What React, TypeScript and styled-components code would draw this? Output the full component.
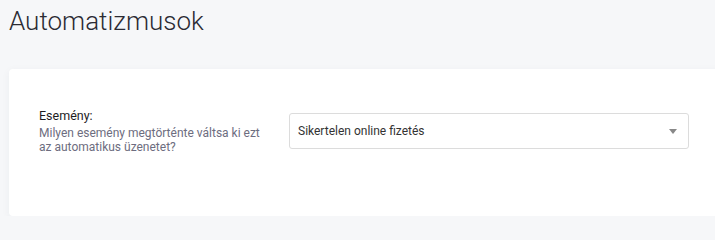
import React from "react";
import styled, { createGlobalStyle } from "styled-components";

const GlobalStyle = createGlobalStyle`
  html, body {
    margin: 0;
    background: #f6f7f9;
    font-family: Roboto, "Liberation Sans", Arial, sans-serif;
    overflow: hidden;
  }
`;

const Page = styled.div`
  padding-top: 1px;
`;

const Title = styled.h1`
  margin: 3px 0 0 9px;
  font-size: 26px;
  font-weight: 300;
  line-height: 34px;
  color: #2b2b33;
`;

const Card = styled.section`
  margin: 31px -12px 0 9px;
  background: #fff;
  border-radius: 4px;
  box-shadow: 0 2px 8px rgba(40, 50, 70, 0.05);
  padding: 39px 0 62px 30px;
`;

const Row = styled.div`
  display: flex;
  align-items: center;
`;

const LabelCol = styled.div`
  width: 250px;
  padding-right: 24px;
  box-sizing: border-box;
`;

const Label = styled.div`
  font-size: 12.5px;
  line-height: 16px;
  color: #1d1d1f;
`;

const Hint = styled.div`
  margin-top: 2px;
  font-size: 12px;
  line-height: 14px;
  color: #6d6d80;
`;

const Select = styled.div`
  width: 400px;
  height: 36px;
  box-sizing: border-box;
  border: 1px solid #dcdcdc;
  border-radius: 3px;
  display: flex;
  align-items: center;
  justify-content: space-between;
  padding: 0 11px 0 8px;
  font-size: 12px;
  color: #333;
`;

const Caret = styled.span`
  width: 0;
  height: 0;
  border-left: 4px solid transparent;
  border-right: 4px solid transparent;
  border-top: 5px solid #888;
`;

export default function App() {
  return (
    <Page>
      <GlobalStyle />
      <Title>Automatizmusok</Title>
      <Card>
        <Row>
          <LabelCol>
            <Label>Esemény:</Label>
            <Hint>Milyen esemény megtörténte váltsa ki ezt az automatikus üzenetet?</Hint>
          </LabelCol>
          <Select>
            <span>Sikertelen online fizetés</span>
            <Caret />
          </Select>
        </Row>
      </Card>
    </Page>
  );
}
